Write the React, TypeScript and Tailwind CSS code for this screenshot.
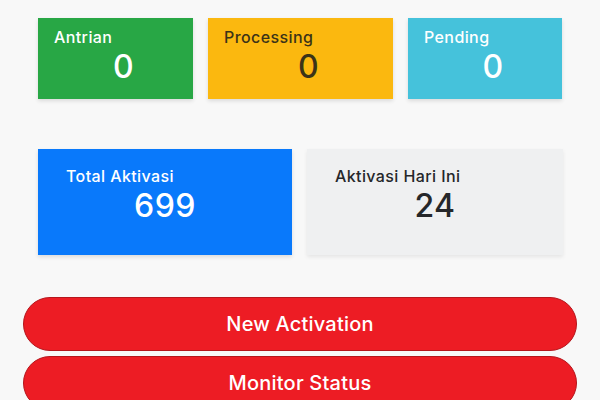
import React from "react";

export default function App() {
  return (
    <div
      className="w-[600px] h-[400px] overflow-hidden bg-[#f8f8f8]"
      style={{ fontFamily: "Inter, 'Noto Sans', sans-serif" }}
    >
      <div className="pt-[18px] pl-[38px] pr-[38px] flex gap-[15px]">
        <div className="w-[155px] h-[81px] bg-[#28a745] pt-[7px] pl-4 text-white shadow-[0_2px_4px_rgba(0,0,0,0.12)]">
          <div className="text-[16px] leading-6 font-medium tracking-[0.4px]">Antrian</div>
          <div className="text-[32px] leading-9 font-medium text-center tracking-[0.5px]">0</div>
        </div>
        <div className="w-[185px] h-[81px] bg-[#fbb80f] pt-[7px] pl-4 text-[#3b3318] shadow-[0_2px_4px_rgba(0,0,0,0.12)]">
          <div className="text-[16px] leading-6 font-medium tracking-[0.4px]">Processing</div>
          <div className="text-[32px] leading-9 font-medium text-center tracking-[0.5px]">0</div>
        </div>
        <div className="w-[154px] h-[81px] bg-[#45c2db] pt-[7px] pl-4 text-white shadow-[0_2px_4px_rgba(0,0,0,0.12)]">
          <div className="text-[16px] leading-6 font-medium tracking-[0.4px]">Pending</div>
          <div className="text-[32px] leading-9 font-medium text-center tracking-[0.5px]">0</div>
        </div>
      </div>

      <div className="mt-[50px] pl-[38px] flex gap-[15px]">
        <div className="w-[254px] h-[106px] bg-[#0979fb] pt-[15px] px-7 text-white shadow-[0_2px_4px_rgba(0,0,0,0.12)]">
          <div className="text-[16px] leading-6 font-medium tracking-[0.4px]">Total Aktivasi</div>
          <div className="text-[32px] leading-9 font-medium text-center tracking-[0.5px]">699</div>
        </div>
        <div className="w-[256px] h-[106px] bg-[#eff0f1] pt-[15px] px-7 text-[#25272a] shadow-[0_2px_4px_rgba(0,0,0,0.08)]">
          <div className="text-[16px] leading-6 font-medium tracking-[0.4px]">Aktivasi Hari Ini</div>
          <div className="text-[32px] leading-9 font-medium text-center tracking-[0.5px]">24</div>
        </div>
      </div>

      <div className="mt-[42px] px-[23px] flex flex-col gap-[5px]">
        <button className="w-[554px] h-[54px] rounded-full bg-[#ed1c24] border border-[#b5161c] text-white text-[20px] font-medium tracking-[0.2px] flex items-center justify-center">
          New Activation
        </button>
        <button className="w-[554px] h-[54px] rounded-full bg-[#ed1c24] border border-[#b5161c] text-white text-[20px] font-medium tracking-[0.2px] flex items-center justify-center">
          Monitor Status
        </button>
      </div>
    </div>
  );
}
